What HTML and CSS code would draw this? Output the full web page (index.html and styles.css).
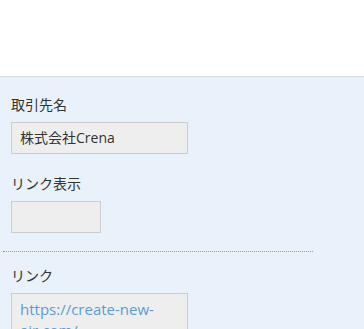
FILE: index.html
```html
<!DOCTYPE html>
<html lang="ja">
<head>
  <meta charset="UTF-8">
  <meta name="viewport" content="width=device-width, initial-scale=1.0">
  <title>取引先</title>
  <link rel="stylesheet" href="styles.css">
</head>
<body>
  <div class="header"></div>

  <div class="panel">
    <div class="field">
      <div class="label">取引先名</div>
      <div class="box wide">株式会社Crena</div>
    </div>

    <div class="field">
      <div class="label">リンク表示</div>
      <div class="box narrow"></div>
    </div>

    <hr class="divider">

    <div class="field">
      <div class="label">リンク</div>
      <div class="box wide"><a href="#" class="link">https://create-new-air.com/</a></div>
    </div>
  </div>
</body>
</html>
```

FILE: styles.css
```css
body {
  margin: 0;
  font-family: "Open Sans", "Noto Sans CJK JP", sans-serif;
  font-size: 14px;
  color: #333;
  background: #e9f1fb;
}
.header {
  height: 76px;
  background: #fff;
  border-bottom: 1px solid #dddddd;
}
.panel {
  padding: 18px 0 0 0;
}
.field {
  padding: 0 11px;
  margin-bottom: 20px;
}
.label {
  line-height: 20px;
  margin-bottom: 7px;
}
.box {
  box-sizing: border-box;
  background: #eeeeee;
  border: 1px solid #cccccc;
  min-height: 32px;
  padding: 5px 8px;
  line-height: 20px;
}
.wide {
  width: 177px;
}
.narrow {
  width: 90px;
}
.divider {
  border: none;
  border-top: 1px dotted #999;
  margin: -2px 51px 14px 3px;
}
.link {
  color: #5b9bd8;
  font-size: 15px;
  text-decoration: none;
}
```
